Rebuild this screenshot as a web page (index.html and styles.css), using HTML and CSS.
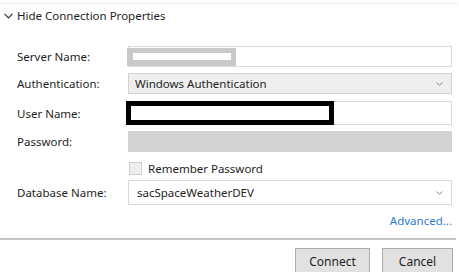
FILE: index.html
```html
<!DOCTYPE html>
<html lang="en">
<head>
    <meta charset="UTF-8">
    <title>Connection Properties</title>
    <link rel="stylesheet" href="styles.css">
</head>
<body>
    <div class="topline"></div>
    <div class="toggle">
        <svg class="toggle-icon" width="9" height="6" viewBox="0 0 9 6"><polyline points="0.5,0.8 4.5,4.8 8.5,0.8" fill="none" stroke="#333" stroke-width="1.2"/></svg>
        <span>Hide Connection Properties</span>
    </div>
    <form class="props" onsubmit="event.preventDefault();">
        <div class="row row-server">
            <label>Server Name:</label>
            <div class="field">
                <span class="blur"><span class="blur-inner"></span></span>
            </div>
        </div>
        <div class="row row-auth">
            <label>Authentication:</label>
            <div class="field select disabled-select">
                <span class="value">Windows Authentication</span>
                <svg class="caret" width="7" height="4" viewBox="0 0 7 4"><polyline points="0.5,0.5 3.5,3.3 6.5,0.5" fill="none" stroke="#888" stroke-width="1"/></svg>
            </div>
        </div>
        <div class="row row-user">
            <label>User Name:</label>
            <div class="field user-field">
                <span class="blackout"></span>
            </div>
        </div>
        <div class="row row-pass">
            <label>Password:</label>
            <div class="field disabled"></div>
        </div>
        <div class="row row-remember">
            <label></label>
            <div class="check">
                <span class="box"></span>
                <span>Remember Password</span>
            </div>
        </div>
        <div class="row row-db">
            <label>Database Name:</label>
            <div class="field select">
                <span class="value">sacSpaceWeatherDEV</span>
                <svg class="caret" width="7" height="4" viewBox="0 0 7 4"><polyline points="0.5,0.5 3.5,3.3 6.5,0.5" fill="none" stroke="#888" stroke-width="1"/></svg>
            </div>
        </div>
        <div class="advanced"><a href="#">Advanced...</a></div>
    </form>
    <div class="separator"></div>
    <div class="buttons">
        <button type="submit" class="btn-connect">Connect</button>
        <button type="button" class="btn-cancel">Cancel</button>
    </div>
</body>
</html>
```

FILE: styles.css
```css
body {
    font-family: "Noto Sans", "Open Sans", sans-serif;
    font-size: 11.5px;
    color: #1e1e1e;
    margin: 0;
    background: #fff;
    width: 459px;
    height: 272px;
    overflow: hidden;
}
.topline {
    margin-top: 3px;
    width: 458px;
    border-top: 1px solid #ececec;
}
.toggle {
    display: flex;
    align-items: center;
    gap: 4px;
    padding-left: 4px;
    margin-top: 4px;
    height: 14px;
    font-size: 11.5px;
}
.toggle-icon {
    margin-top: 1px;
}
.props {
    display: flex;
    flex-direction: column;
    padding-left: 17px;
    margin-top: 24px;
}
.row {
    display: flex;
    align-items: center;
    height: 21px;
}
.row-auth { margin-top: 6px; }
.row-user { margin-top: 7px; height: 24px; }
.row-pass { margin-top: 6px; }
.row-remember { margin-top: 8px; height: 17px; }
.row-db { margin-top: 3px; height: 25px; }
label {
    width: 111px;
    flex-shrink: 0;
}
.field {
    width: 324px;
    height: 100%;
    box-sizing: border-box;
    border: 1px solid #d9d9d9;
    background: #fff;
    display: flex;
    align-items: center;
    position: relative;
}
.blur {
    width: 109px;
    height: 18px;
    margin-left: -2px;
    background: #c9c9c9;
    display: flex;
    align-items: center;
    justify-content: center;
}
.blur-inner {
    width: 98px;
    height: 7px;
    background: #fff;
}
.select {
    justify-content: space-between;
    padding: 0 8px 0 6px;
}
.disabled-select {
    background: #eeeeee;
    border-color: #d2d2d2;
}
.row-db .select {
    padding-left: 8px;
}
.disabled {
    background: #d3d3d3;
    border-color: #d3d3d3;
}
.blackout {
    position: absolute;
    left: -3px;
    top: -1px;
    width: 208px;
    height: 24px;
    box-sizing: border-box;
    border: 5px solid #000;
    background: #fff;
}
.check {
    display: flex;
    align-items: center;
    gap: 6px;
    margin-left: 1px;
}
.box {
    width: 13px;
    height: 13px;
    box-sizing: border-box;
    border: 1px solid #cfcfcf;
    background: #eeeeee;
}
.advanced {
    width: 435px;
    text-align: right;
    margin-top: 8px;
}
.advanced a {
    color: #2b7bd3;
    text-decoration: none;
}
.separator {
    margin-top: 10px;
    width: 456px;
    height: 2px;
    background: #c5c5c5;
}
.buttons {
    display: flex;
    justify-content: flex-end;
    gap: 12px;
    width: 453px;
    margin-top: 8px;
}
button {
    font-family: inherit;
    font-size: 12px;
    color: #1e1e1e;
    background: #e1e1e1;
    border: 1px solid #adadad;
    height: 26px;
    padding: 0;
}
.btn-connect { width: 75px; }
.btn-cancel { width: 71px; }
```
